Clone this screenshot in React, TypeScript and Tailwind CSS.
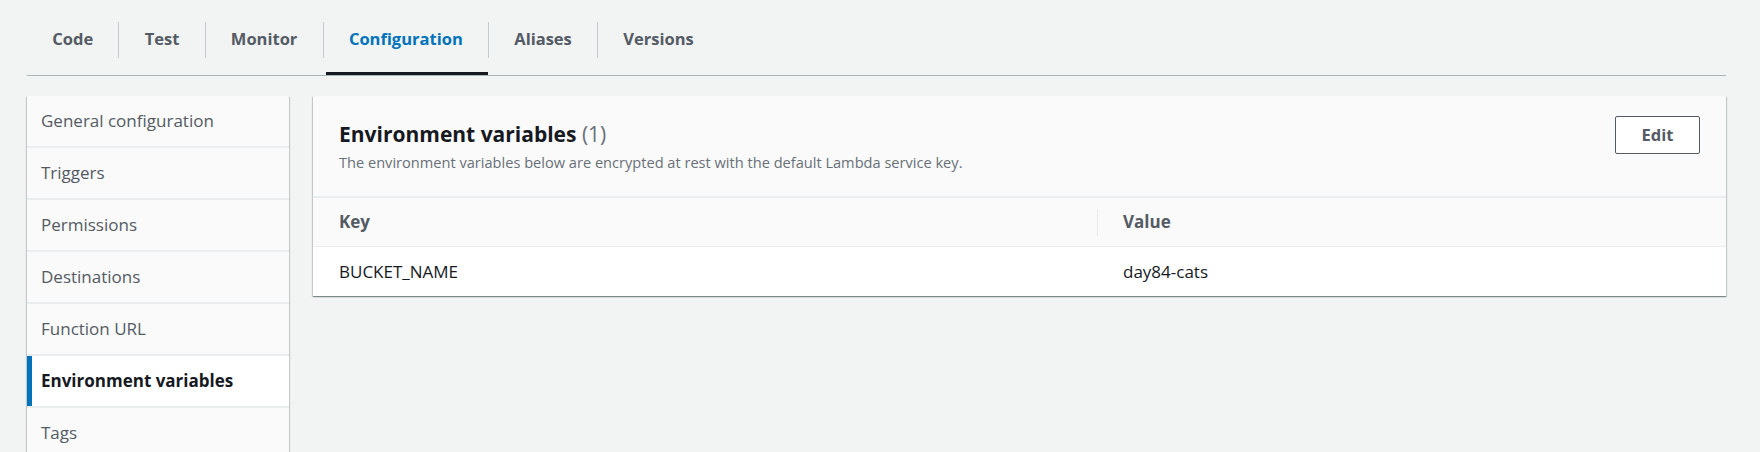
import React from "react";

const tabs = ["Code", "Test", "Monitor", "Configuration", "Aliases", "Versions"];
const side = [
  "General configuration",
  "Triggers",
  "Permissions",
  "Destinations",
  "Function URL",
  "Environment variables",
  "Tags",
];

export default function App() {
  return (
    <div
      className="w-[1760px] h-[452px] overflow-hidden bg-[#f2f3f3] text-[#16191f]"
      style={{ fontFamily: '"Open Sans", "Noto Sans", Arial, sans-serif' }}
    >
      <div className="pl-[27px] pr-[34px]">
        <div className="flex h-[76px] items-end border-b border-[#aab7b8]">
          {tabs.map((t, i) => (
            <React.Fragment key={t}>
              {i > 0 && <div className="w-px h-[36px] bg-[#c5cbcc] mb-[17px]" />}
              <div
                className={
                  "relative h-[75px] flex items-center px-[25.25px] pt-[3px] text-[16.5px] font-bold " +
                  (t === "Configuration" ? "text-[#0073bb]" : "text-[#545b64]")
                }
              >
                {t}
                {t === "Configuration" && (
                  <div className="absolute left-[2px] right-0 bottom-0 h-[3px] bg-[#16191f]" />
                )}
              </div>
            </React.Fragment>
          ))}
        </div>
      </div>
      <div className="flex gap-[24px] pl-[27px] pr-[34px] pt-[20px]">
        <div className="w-[262px] shrink-0 bg-[#fafafa] shadow-[0_1px_1px_0_rgba(0,28,36,0.3),1px_1px_1px_0_rgba(0,28,36,0.15),-1px_1px_1px_0_rgba(0,28,36,0.15)]">
          {side.map((s) => {
            const active = s === "Environment variables";
            return (
              <div
                key={s}
                className={
                  "relative h-[52px] flex items-center pl-[14px] pb-[1px] border-b-2 border-[#eaeded] text-[17px] " +
                  (active ? "bg-white font-bold text-[#16191f]" : "text-[#545b64]")
                }
              >
                {active && <div className="absolute left-0 top-0 bottom-[0px] w-[5px] bg-[#0073bb]" />}
                {s}
              </div>
            );
          })}
        </div>
        <div className="flex-1 self-start bg-white shadow-[0_1px_1px_0_rgba(0,28,36,0.3),1px_1px_1px_0_rgba(0,28,36,0.15),-1px_1px_1px_0_rgba(0,28,36,0.15)]">
          <div className="h-[102px] bg-[#fafafa] border-b-2 border-[#eaeded] flex justify-between pl-[26px] pr-[26px] pt-[20px]">
            <div>
              <div className="text-[21px] font-bold leading-[36px] text-[#16191f]">
                Environment variables <span className="font-normal text-[#687078]">(1)</span>
              </div>
              <div className="text-[14.6px] leading-[20px] text-[#687078]">
                The environment variables below are encrypted at rest with the default Lambda service key.
              </div>
            </div>
            <button className="h-[38px] w-[85px] border border-[#545b64] rounded-[2px] bg-white text-[16.5px] font-bold text-[#545b64]">
              Edit
            </button>
          </div>
          <div className="flex h-[49px] items-center bg-[#fafafa] border-b border-[#eaeded] text-[17px] font-bold text-[#545b64]">
            <div className="w-[785px] pl-[26px] relative h-full flex items-center">
              Key
              <div className="absolute right-0 top-[11px] h-[27px] w-px bg-[#eaeded]" />
            </div>
            <div className="pl-[25px]">Value</div>
          </div>
          <div className="flex h-[49px] items-center text-[17px] text-[#16191f]">
            <div className="w-[785px] pl-[26px]">BUCKET_NAME</div>
            <div className="pl-[25px]">day84-cats</div>
          </div>
        </div>
      </div>
    </div>
  );
}
